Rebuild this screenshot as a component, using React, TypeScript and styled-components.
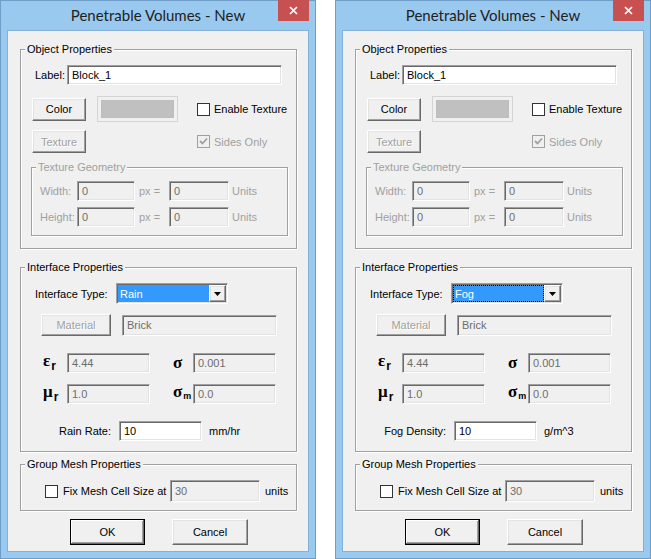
import React from "react";
import styled, { createGlobalStyle, css } from "styled-components";

const GlobalStyle = createGlobalStyle`
  html, body { margin: 0; padding: 0; background: #ffffff; }
  body { font-family: "Liberation Sans", Arial, sans-serif; font-size: 11px; color: #000; }
  #root { width: 651px; height: 559px; }
`;

const Desktop = styled.div`
  display: flex;
  gap: 19px;
  width: 651px;
  height: 559px;
`;

const Window = styled.div`
  box-sizing: border-box;
  width: 316px;
  height: 559px;
  background: #99c9ef;
  border: 1px solid #6f9dc7;
  padding: 0 6px 6px;
  display: flex;
  flex-direction: column;
`;

const TitleBar = styled.div`
  height: 29px;
  display: grid;
  grid-template-columns: 1fr auto 1fr;
  align-items: start;
`;

const Title = styled.div`
  grid-column: 2;
  font-family: Lato, "Open Sans", sans-serif;
  font-size: 15px;
  line-height: 28px;
  color: #1f1f1f;
  white-space: nowrap;
`;

const CloseButton = styled.div`
  grid-column: 3;
  justify-self: end;
  margin-top: -1px;
  width: 31px;
  height: 21px;
  background: #c75050;
  display: flex;
  align-items: center;
  justify-content: center;
`;

const Content = styled.div`
  flex: 1;
  box-sizing: border-box;
  border: 1px solid #86b0d6;
  background: #f0f0f0;
  padding: 0 0 0 12px;
  display: flex;
  flex-direction: column;
  align-items: flex-start;
`;

const Group = styled.fieldset<{ $w: number; $top: number; $left?: number; $pb: number }>`
  box-sizing: border-box;
  width: ${(p) => p.$w}px;
  margin: ${(p) => p.$top}px 0 0 ${(p) => p.$left ?? 0}px;
  padding: 0 0 ${(p) => p.$pb}px 0;
  min-width: 0;
  border: 1px solid #a0a0a0;
  box-shadow: inset 1px 1px 0 #ffffff, 1px 1px 0 #ffffff;
`;

const Legend = styled.legend<{ $disabled?: boolean }>`
  margin-left: 4px;
  padding: 0 2px;
  font-size: 11px;
  line-height: 13px;
  background: #f0f0f0;
  color: ${(p) => (p.$disabled ? "#a0a0a0" : "#000")};
`;

const Row = styled.div<{ $top: number; $indent: number; $h: number }>`
  display: flex;
  align-items: center;
  margin-top: ${(p) => p.$top}px;
  padding-left: ${(p) => p.$indent}px;
  height: ${(p) => p.$h}px;
`;

const Text = styled.span<{ $w?: number; $ml?: number; $disabled?: boolean; $right?: boolean }>`
  display: inline-block;
  box-sizing: border-box;
  white-space: nowrap;
  ${(p) => (p.$w !== undefined ? `width: ${p.$w}px;` : "")}
  margin-left: ${(p) => p.$ml ?? 0}px;
  color: ${(p) => (p.$disabled ? "#a0a0a0" : "#000")};
  ${(p) => (p.$right ? "text-align: right; padding-right: 8px;" : "")}
`;

const raised = css`
  border-style: solid;
  border-width: 1px;
  border-color: #ffffff #696969 #696969 #ffffff;
  box-shadow: inset -1px -1px 0 #a0a0a0, inset 1px 1px 0 #e3e3e3;
`;

const sunken = css`
  border-style: solid;
  border-width: 1px;
  border-color: #a0a0a0 #ffffff #ffffff #a0a0a0;
  box-shadow: inset 1px 1px 0 #696969, inset -1px -1px 0 #e3e3e3;
`;

const Button = styled.div<{ $w: number; $h: number; $ml?: number; $disabled?: boolean; $default?: boolean }>`
  box-sizing: border-box;
  width: ${(p) => p.$w}px;
  height: ${(p) => p.$h}px;
  margin-left: ${(p) => p.$ml ?? 0}px;
  background: #f0f0f0;
  display: flex;
  align-items: center;
  justify-content: center;
  ${raised}
  ${(p) =>
    p.$default
      ? `border-color: #000; box-shadow: inset -1px -1px 0 #696969, inset 1px 1px 0 #ffffff, inset -2px -2px 0 #a0a0a0;`
      : ""}
  color: ${(p) => (p.$disabled ? "#a0a0a0" : "#000")};
  ${(p) => (p.$disabled ? "text-shadow: 1px 1px 0 #ffffff;" : "")}
`;

const Field = styled.div<{ $w: number; $h: number; $ml?: number; $disabled?: boolean }>`
  box-sizing: border-box;
  width: ${(p) => p.$w}px;
  height: ${(p) => p.$h}px;
  margin-left: ${(p) => p.$ml ?? 0}px;
  ${sunken}
  background: ${(p) => (p.$disabled ? "#f0f0f0" : "#ffffff")};
  color: ${(p) => (p.$disabled ? "#6d6d6d" : "#000")};
  padding-left: 4px;
  display: flex;
  align-items: center;
  white-space: nowrap;
`;

const Swatch = styled.div<{ $ml: number }>`
  box-sizing: border-box;
  width: 81px;
  height: 26px;
  margin-left: ${(p) => p.$ml}px;
  border: 1px solid #d4d4d4;
  background: #f0f0f0;
  padding: 3px;
  display: flex;
`;

const SwatchFill = styled.div`
  flex: 1;
  background: #c0c0c0;
  border: 1px solid #bdbdbd;
`;

const Box = styled.div<{ $ml?: number; $disabled?: boolean }>`
  box-sizing: border-box;
  width: 13px;
  height: 13px;
  margin-left: ${(p) => p.$ml ?? 0}px;
  border: 1px solid ${(p) => (p.$disabled ? "#a0a0a0" : "#333333")};
  background: ${(p) => (p.$disabled ? "#f0f0f0" : "#ffffff")};
  display: flex;
  align-items: center;
  justify-content: center;
`;

const Combo = styled.div`
  box-sizing: border-box;
  width: 112px;
  height: 21px;
  ${sunken}
  background: #ffffff;
  padding: 1px;
  display: flex;
`;

const ComboValue = styled.div<{ $focus?: boolean }>`
  flex: 1;
  background: #3399ff;
  color: #ffffff;
  padding-left: 2px;
  display: flex;
  align-items: center;
  ${(p) => (p.$focus ? "outline: 1px dotted #000; outline-offset: -1px;" : "")}
`;

const ComboArrow = styled.div`
  box-sizing: border-box;
  width: 17px;
  background: #f0f0f0;
  ${raised}
  display: flex;
  align-items: center;
  justify-content: center;
`;

const Sym = styled.span<{ $w: number; $ml?: number }>`
  display: inline-block;
  width: ${(p) => p.$w}px;
  margin-left: ${(p) => p.$ml ?? 0}px;
  font-family: "Liberation Serif", "DejaVu Serif", serif;
  font-weight: bold;
  font-size: 17px;
  line-height: 20px;
  white-space: nowrap;
`;

const Sub = styled.sub<{ $small?: boolean }>`
  font-family: "Liberation Sans", Arial, sans-serif;
  font-weight: bold;
  font-size: ${(p) => (p.$small ? 9 : 12)}px;
  vertical-align: ${(p) => (p.$small ? "-2px" : "-4px")};
  margin-left: 1px;
`;

const ButtonRow = styled.div`
  display: flex;
  margin-top: 8px;
  padding-left: 50px;
`;

const Check = ({ color }: { color: string }) => (
  <svg width="9" height="9" viewBox="0 0 9 9">
    <path d="M1 4 L3.5 6.5 L8 1.5" fill="none" stroke={color} strokeWidth="1.8" />
  </svg>
);

const CloseX = () => (
  <svg width="9" height="9" viewBox="0 0 9 9">
    <path d="M1 1 L8 8 M8 1 L1 8" stroke="#ffffff" strokeWidth="1.7" fill="none" />
  </svg>
);

const Arrow = () => (
  <svg width="7" height="4" viewBox="0 0 7 4">
    <path d="M0 0 H7 L3.5 4 Z" fill="#000" />
  </svg>
);

type DialogProps = { type: string; rateLabel: string; unit: string; focus?: boolean };

const Dialog = ({ type, rateLabel, unit, focus }: DialogProps) => (
  <Window>
    <TitleBar>
      <Title>Penetrable Volumes - New</Title>
      <CloseButton>
        <CloseX />
      </CloseButton>
    </TitleBar>
    <Content>
      <Group $w={277} $top={12} $pb={12}>
        <Legend>Object Properties</Legend>
        <Row $top={9} $indent={14} $h={20}>
          <Text $w={32}>Label:</Text>
          <Field $w={215} $h={20}>Block_1</Field>
        </Row>
        <Row $top={11} $indent={11} $h={26}>
          <Button $w={54} $h={23}>Color</Button>
          <Swatch $ml={11}>
            <SwatchFill />
          </Swatch>
          <Box $ml={19} />
          <Text $ml={4}>Enable Texture</Text>
        </Row>
        <Row $top={8} $indent={11} $h={23}>
          <Button $w={54} $h={23} $disabled>Texture</Button>
          <Box $ml={111} $disabled>
            <Check color="#a0a0a0" />
          </Box>
          <Text $ml={4} $disabled>Sides Only</Text>
        </Row>
        <Group $w={257} $top={8} $left={10} $pb={8}>
          <Legend $disabled>Texture Geometry</Legend>
          <Row $top={7} $indent={8} $h={20}>
            <Text $w={37} $disabled>Width:</Text>
            <Field $w={58} $h={20} $disabled>0</Field>
            <Text $w={34} $disabled style={{ paddingLeft: 4 }}>px =</Text>
            <Field $w={60} $h={20} $disabled>0</Field>
            <Text $ml={3} $disabled>Units</Text>
          </Row>
          <Row $top={6} $indent={8} $h={20}>
            <Text $w={37} $disabled>Height:</Text>
            <Field $w={58} $h={20} $disabled>0</Field>
            <Text $w={34} $disabled style={{ paddingLeft: 4 }}>px =</Text>
            <Field $w={60} $h={20} $disabled>0</Field>
            <Text $ml={3} $disabled>Units</Text>
          </Row>
        </Group>
      </Group>

      <Group $w={277} $top={12} $pb={10}>
        <Legend>Interface Properties</Legend>
        <Row $top={9} $indent={14} $h={21}>
          <Text $w={81}>Interface Type:</Text>
          <Combo>
            <ComboValue $focus={focus}>{type}</ComboValue>
            <ComboArrow>
              <Arrow />
            </ComboArrow>
          </Combo>
        </Row>
        <Row $top={10} $indent={20} $h={22}>
          <Button $w={70} $h={22} $disabled>Material</Button>
          <Field $w={155} $h={21} $ml={11} $disabled>Brick</Field>
        </Row>
        <Row $top={17} $indent={22} $h={20}>
          <Sym $w={24}>ε<Sub>r</Sub></Sym>
          <Field $w={83} $h={20} $disabled>4.44</Field>
          <Sym $w={20} $ml={23}>σ</Sym>
          <Field $w={83} $h={20} $disabled>0.001</Field>
        </Row>
        <Row $top={11} $indent={22} $h={20}>
          <Sym $w={24}>μ<Sub>r</Sub></Sym>
          <Field $w={83} $h={20} $disabled>1.0</Field>
          <Sym $w={20} $ml={23}>σ<Sub $small>m</Sub></Sym>
          <Field $w={83} $h={20} $disabled>0.0</Field>
        </Row>
        <Row $top={17} $indent={0} $h={20}>
          <Text $w={98} $right>{rateLabel}</Text>
          <Field $w={83} $h={20}>10</Field>
          <Text $ml={7}>{unit}</Text>
        </Row>
      </Group>

      <Group $w={277} $top={6} $pb={8}>
        <Legend>Group Mesh Properties</Legend>
        <Row $top={9} $indent={24} $h={22}>
          <Box />
          <Text $ml={5} $w={107}>Fix Mesh Cell Size at</Text>
          <Field $w={90} $h={22} $disabled>30</Field>
          <Text $ml={5}>units</Text>
        </Row>
      </Group>

      <ButtonRow>
        <Button $w={75} $h={26} $default>OK</Button>
        <Button $w={76} $h={26} $ml={27}>Cancel</Button>
      </ButtonRow>
    </Content>
  </Window>
);

export default function App() {
  return (
    <>
      <GlobalStyle />
      <Desktop>
        <Dialog type="Rain" rateLabel="Rain Rate:" unit="mm/hr" />
        <Dialog type="Fog" rateLabel="Fog Density:" unit="g/m^3" focus />
      </Desktop>
    </>
  );
}
